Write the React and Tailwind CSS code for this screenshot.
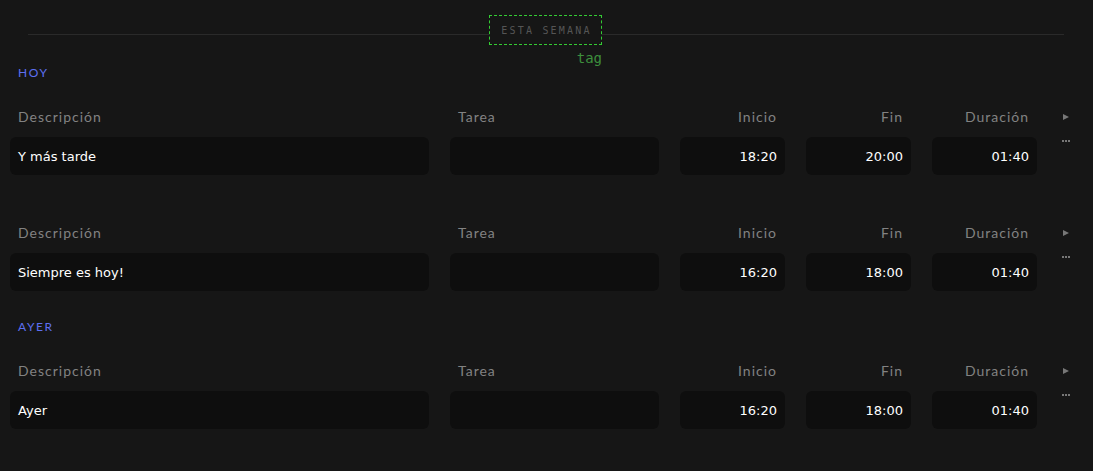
import React from "react";

const labelCls =
  "h-[20px] leading-[20px] text-[14px] tracking-[1px] text-[#828282] px-[8px]";
const inputCls =
  "h-[38px] rounded-[6px] bg-[#0e0e0e] text-white text-[13px] leading-[40px] px-[8px] whitespace-nowrap";

function Row({ desc, start, end, dur }) {
  return (
    <div className="flex items-start">
      <div className="flex flex-col w-[419px]">
        <div className={labelCls}>Descripción</div>
        <div className={`mt-[10px] ${inputCls}`} style={{ fontFamily: '"DejaVu Sans", sans-serif' }}>
          {desc}
        </div>
      </div>
      <div className="flex flex-col w-[209px] ml-[21px]">
        <div className={labelCls}>Tarea</div>
        <div className={`mt-[10px] ${inputCls}`}></div>
      </div>
      {[
        ["Inicio", start],
        ["Fin", end],
        ["Duración", dur],
      ].map(([l, v]) => (
        <div key={l} className="flex flex-col w-[105px] ml-[21px]">
          <div className={`${labelCls} text-right`}>{l}</div>
          <div
            className={`mt-[10px] ${inputCls} text-right`}
            style={{ fontFamily: '"DejaVu Sans", sans-serif' }}
          >
            {v}
          </div>
        </div>
      ))}
      <div className="flex flex-col ml-[25px] w-[10px]">
        <div className="h-[20px] flex items-center">
          <div className="w-0 h-0 border-y-[3.5px] border-y-transparent border-l-[6px] border-l-[#777] ml-[1px]"></div>
        </div>
        <div className="mt-[13px] flex gap-[1px]">
          <div className="w-[2px] h-[2px] bg-[#777]"></div>
          <div className="w-[2px] h-[2px] bg-[#777]"></div>
          <div className="w-[2px] h-[2px] bg-[#777]"></div>
        </div>
      </div>
    </div>
  );
}

function Heading({ children }) {
  return (
    <div className="h-[14px] leading-[14px] text-[12px] font-normal tracking-[1.6px] text-[#5d6ff0] px-[8px] mb-[27px]">
      {children}
    </div>
  );
}

export default function App() {
  return (
    <div
      className="w-[1093px] h-[471px] bg-[#161616] overflow-hidden pl-[10px]"
      style={{ fontFamily: 'Lato, "Noto Sans", sans-serif' }}
    >
      <div className="relative pt-[15px]">
        <div className="absolute left-[18px] right-[29px] top-[34px] h-px bg-[#2a2a2a]"></div>
        <div className="relative flex justify-center pr-[12px]">
          <div className="flex flex-col items-end">
            <div
              className="w-[113px] h-[30px] border border-dashed border-[#33cc33] bg-[#161616] flex items-center justify-center text-[10px] tracking-[2.2px] text-[#555] pl-[2px]"
              style={{ fontFamily: '"DejaVu Sans Mono", monospace' }}
            >
              ESTA SEMANA
            </div>
            <div
              className="mt-[5px] h-[16px] leading-[16px] text-[14px] text-[#3d8f3d]"
              style={{ fontFamily: '"DejaVu Sans Mono", monospace' }}
            >
              tag
            </div>
          </div>
        </div>
      </div>
      <Heading>HOY</Heading>
      <Row desc="Y más tarde" start="18:20" end="20:00" dur="01:40" />
      <div className="h-[48px]"></div>
      <Row desc="Siempre es hoy!" start="16:20" end="18:00" dur="01:40" />
      <div className="h-[29px]"></div>
      <Heading>AYER</Heading>
      <Row desc="Ayer" start="16:20" end="18:00" dur="01:40" />
    </div>
  );
}
